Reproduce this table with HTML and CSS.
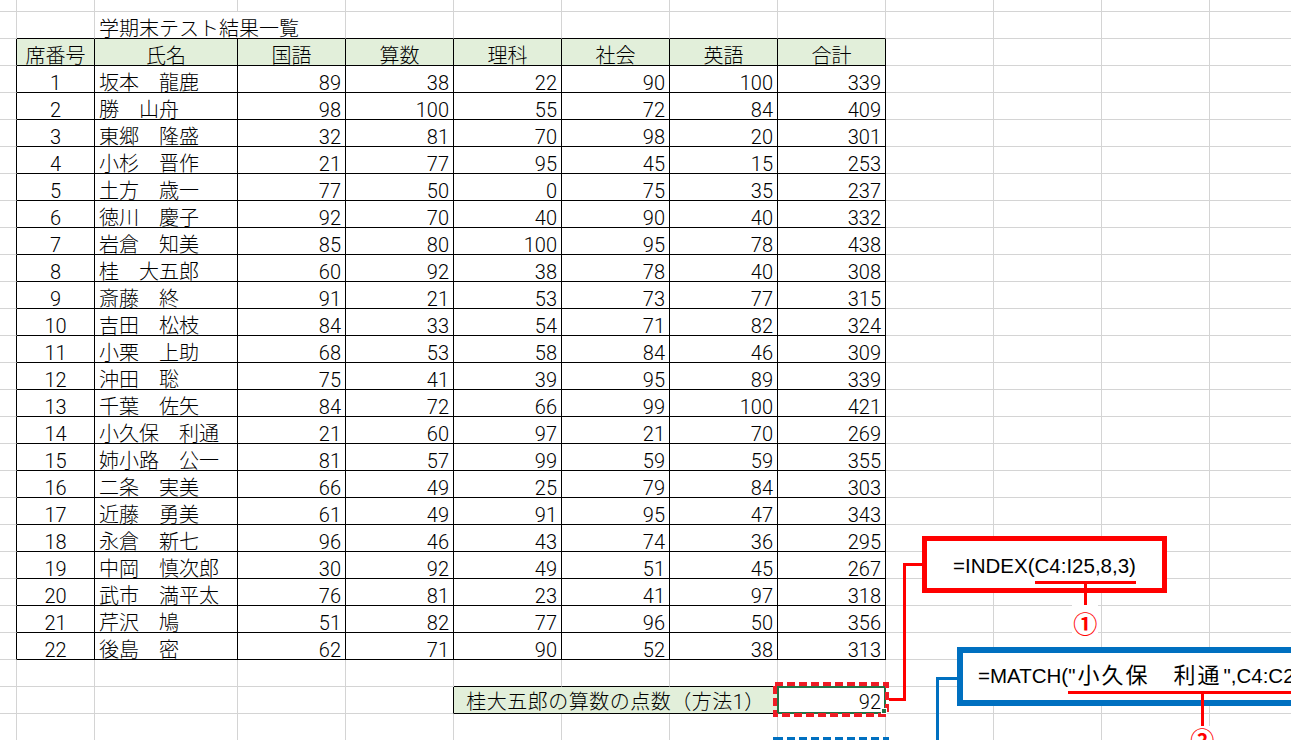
FILE: index.html
```html
<!DOCTYPE html>
<html lang="ja">
<head>
<meta charset="utf-8">
<title>学期末テスト結果一覧</title>
<link rel="stylesheet" href="styles.css">
</head>
<body>
<table class="sheet">
<colgroup>
<col class="ca"><col class="cb"><col class="cc"><col class="cw"><col class="cw"><col class="cw"><col class="cw"><col class="cw"><col class="cw"><col class="cw"><col class="cw"><col class="cw"><col class="cw">
</colgroup>
<tbody>
<tr class="top"><td></td><td></td><td></td><td></td><td></td><td></td><td></td><td></td><td></td><td></td><td></td><td></td><td></td></tr>
<tr><td></td><td class="tb"></td><td class="tb title" colspan="2">学期末テスト結果一覧</td><td class="tb"></td><td class="tb"></td><td class="tb"></td><td class="tb"></td><td class="tb"></td><td></td><td></td><td></td><td></td></tr>
<tr><td class="lb"></td><td class="k h">席番号</td><td class="k h">氏名</td><td class="k h">国語</td><td class="k h">算数</td><td class="k h">理科</td><td class="k h">社会</td><td class="k h">英語</td><td class="k h">合計</td><td></td><td></td><td></td><td></td></tr>
<tr><td class="lb"></td><td class="k c">1</td><td class="k">坂本　龍鹿</td><td class="k n">89</td><td class="k n">38</td><td class="k n">22</td><td class="k n">90</td><td class="k n">100</td><td class="k n">339</td><td></td><td></td><td></td><td></td></tr>
<tr><td class="lb"></td><td class="k c">2</td><td class="k">勝　山舟</td><td class="k n">98</td><td class="k n">100</td><td class="k n">55</td><td class="k n">72</td><td class="k n">84</td><td class="k n">409</td><td></td><td></td><td></td><td></td></tr>
<tr><td class="lb"></td><td class="k c">3</td><td class="k">東郷　隆盛</td><td class="k n">32</td><td class="k n">81</td><td class="k n">70</td><td class="k n">98</td><td class="k n">20</td><td class="k n">301</td><td></td><td></td><td></td><td></td></tr>
<tr><td class="lb"></td><td class="k c">4</td><td class="k">小杉　晋作</td><td class="k n">21</td><td class="k n">77</td><td class="k n">95</td><td class="k n">45</td><td class="k n">15</td><td class="k n">253</td><td></td><td></td><td></td><td></td></tr>
<tr><td class="lb"></td><td class="k c">5</td><td class="k">土方　歳一</td><td class="k n">77</td><td class="k n">50</td><td class="k n">0</td><td class="k n">75</td><td class="k n">35</td><td class="k n">237</td><td></td><td></td><td></td><td></td></tr>
<tr><td class="lb"></td><td class="k c">6</td><td class="k">徳川　慶子</td><td class="k n">92</td><td class="k n">70</td><td class="k n">40</td><td class="k n">90</td><td class="k n">40</td><td class="k n">332</td><td></td><td></td><td></td><td></td></tr>
<tr><td class="lb"></td><td class="k c">7</td><td class="k">岩倉　知美</td><td class="k n">85</td><td class="k n">80</td><td class="k n">100</td><td class="k n">95</td><td class="k n">78</td><td class="k n">438</td><td></td><td></td><td></td><td></td></tr>
<tr><td class="lb"></td><td class="k c">8</td><td class="k">桂　大五郎</td><td class="k n">60</td><td class="k n">92</td><td class="k n">38</td><td class="k n">78</td><td class="k n">40</td><td class="k n">308</td><td></td><td></td><td></td><td></td></tr>
<tr><td class="lb"></td><td class="k c">9</td><td class="k">斎藤　終</td><td class="k n">91</td><td class="k n">21</td><td class="k n">53</td><td class="k n">73</td><td class="k n">77</td><td class="k n">315</td><td></td><td></td><td></td><td></td></tr>
<tr><td class="lb"></td><td class="k c">10</td><td class="k">吉田　松枝</td><td class="k n">84</td><td class="k n">33</td><td class="k n">54</td><td class="k n">71</td><td class="k n">82</td><td class="k n">324</td><td></td><td></td><td></td><td></td></tr>
<tr><td class="lb"></td><td class="k c">11</td><td class="k">小栗　上助</td><td class="k n">68</td><td class="k n">53</td><td class="k n">58</td><td class="k n">84</td><td class="k n">46</td><td class="k n">309</td><td></td><td></td><td></td><td></td></tr>
<tr><td class="lb"></td><td class="k c">12</td><td class="k">沖田　聡</td><td class="k n">75</td><td class="k n">41</td><td class="k n">39</td><td class="k n">95</td><td class="k n">89</td><td class="k n">339</td><td></td><td></td><td></td><td></td></tr>
<tr><td class="lb"></td><td class="k c">13</td><td class="k">千葉　佐矢</td><td class="k n">84</td><td class="k n">72</td><td class="k n">66</td><td class="k n">99</td><td class="k n">100</td><td class="k n">421</td><td></td><td></td><td></td><td></td></tr>
<tr><td class="lb"></td><td class="k c">14</td><td class="k">小久保　利通</td><td class="k n">21</td><td class="k n">60</td><td class="k n">97</td><td class="k n">21</td><td class="k n">70</td><td class="k n">269</td><td></td><td></td><td></td><td></td></tr>
<tr><td class="lb"></td><td class="k c">15</td><td class="k">姉小路　公一</td><td class="k n">81</td><td class="k n">57</td><td class="k n">99</td><td class="k n">59</td><td class="k n">59</td><td class="k n">355</td><td></td><td></td><td></td><td></td></tr>
<tr><td class="lb"></td><td class="k c">16</td><td class="k">二条　実美</td><td class="k n">66</td><td class="k n">49</td><td class="k n">25</td><td class="k n">79</td><td class="k n">84</td><td class="k n">303</td><td></td><td></td><td></td><td></td></tr>
<tr><td class="lb"></td><td class="k c">17</td><td class="k">近藤　勇美</td><td class="k n">61</td><td class="k n">49</td><td class="k n">91</td><td class="k n">95</td><td class="k n">47</td><td class="k n">343</td><td></td><td></td><td></td><td></td></tr>
<tr><td class="lb"></td><td class="k c">18</td><td class="k">永倉　新七</td><td class="k n">96</td><td class="k n">46</td><td class="k n">43</td><td class="k n">74</td><td class="k n">36</td><td class="k n">295</td><td></td><td></td><td></td><td></td></tr>
<tr><td class="lb"></td><td class="k c">19</td><td class="k">中岡　慎次郎</td><td class="k n">30</td><td class="k n">92</td><td class="k n">49</td><td class="k n">51</td><td class="k n">45</td><td class="k n">267</td><td></td><td></td><td></td><td></td></tr>
<tr><td class="lb"></td><td class="k c">20</td><td class="k">武市　満平太</td><td class="k n">76</td><td class="k n">81</td><td class="k n">23</td><td class="k n">41</td><td class="k n">97</td><td class="k n">318</td><td></td><td></td><td></td><td></td></tr>
<tr><td class="lb"></td><td class="k c">21</td><td class="k">芹沢　鳩</td><td class="k n">51</td><td class="k n">82</td><td class="k n">77</td><td class="k n">96</td><td class="k n">50</td><td class="k n">356</td><td></td><td></td><td></td><td></td></tr>
<tr><td class="lb"></td><td class="k c">22</td><td class="k">後島　密</td><td class="k n">62</td><td class="k n">71</td><td class="k n">90</td><td class="k n">52</td><td class="k n">38</td><td class="k n">313</td><td></td><td></td><td></td><td></td></tr>
<tr><td></td><td></td><td></td><td></td><td></td><td class="tb"></td><td class="tb"></td><td class="tb"></td><td></td><td></td><td></td><td></td><td></td></tr>
<tr class="res-row"><td></td><td></td><td></td><td></td><td class="lb"></td><td class="lab" colspan="3">桂大五郎の算数の点数（方法1）</td><td class="n">92</td><td></td><td></td><td></td><td></td></tr>
<tr><td></td><td></td><td></td><td></td><td></td><td></td><td></td><td></td><td></td><td></td><td></td><td></td><td></td></tr>
</tbody>
</table>

<svg class="marks" width="1291" height="740" viewBox="0 0 1291 740" aria-hidden="true">
  <rect x="778" y="687" width="107" height="26" fill="none" stroke="#217346" stroke-width="2"/>
  <rect x="775" y="684" width="112" height="31" fill="none" stroke="#ee1c25" stroke-width="4" stroke-dasharray="8 4"/>
  <rect x="881.5" y="708.5" width="5" height="5" fill="#217346" stroke="#fff" stroke-width="1"/>
  <rect x="775" y="739" width="112" height="60" fill="none" stroke="#0070c0" stroke-width="4" stroke-dasharray="8 4"/>
  <polyline points="922,564.5 904.5,564.5 904.5,699.5 889,699.5" fill="none" stroke="#f00" stroke-width="3"/>
  <polyline points="957,678.5 937.5,678.5 937.5,745" fill="none" stroke="#0070c0" stroke-width="3"/>
</svg>

<div class="callout index">=INDEX(<span class="ul">C4:I25,8,3)<span class="pin p1"><span class="num">①</span></span></span></div>
<div class="callout match">=MATCH(<span class="ul">"<span class="jp">小久保　利通</span>",C4:C25,0)<span class="pin p2"><span class="num">②</span></span></span></div>
</body>
</html>
```
FILE: styles.css
```css
html, body {
  margin: 0;
  padding: 0;
  background: #fff;
  overflow: hidden;
}
body {
  position: relative;
  width: 1291px;
  height: 740px;
}

/* ---------- spreadsheet ---------- */
.sheet {
  border-collapse: separate;
  border-spacing: 0;
  table-layout: fixed;
  width: 1318px;
  font-family: "Roboto", "Noto Sans CJK JP", sans-serif;
  font-size: 20px;
  font-weight: 300;
  color: #000;
}
.sheet .ca { width: 17px; }
.sheet .cb { width: 78px; }
.sheet .cc { width: 143px; }
.sheet .cw { width: 108px; }

.sheet td {
  box-sizing: border-box;
  height: 27px;
  padding: 0 4px;
  border: 0;
  border-right: 1px solid #d4d4d4;
  border-bottom: 1px solid #d4d4d4;
  line-height: 18px;
  vertical-align: bottom;
  white-space: nowrap;
}
.sheet tr.top td { height: 12px; }

.sheet td.lb { border-right-color: #000; }
.sheet td.tb { border-bottom-color: #000; }
.sheet td.k { border-right-color: #000; border-bottom-color: #000; }
.sheet td.h { background: #e2efda; text-align: center; }
.sheet td.c { text-align: center; }
.sheet td.n { text-align: right; }

.sheet tr.res-row td { padding-bottom: 2px; }
.sheet td.lab {
  background: #e2efda;
  text-align: center;
  letter-spacing: 0.5px;
  border-right-color: #000;
  border-bottom-color: #000;
}

/* ---------- annotations ---------- */
.marks {
  position: absolute;
  left: 0;
  top: 0;
  pointer-events: none;
}
.callout {
  position: absolute;
  box-sizing: border-box;
  background: #fff;
  font-family: "Liberation Sans", "Noto Sans CJK JP", sans-serif;
  font-size: 20.5px;
  line-height: 44px;
  white-space: nowrap;
  color: #000;
}
.index {
  left: 922px;
  top: 536px;
  width: 245px;
  height: 57px;
  border: 5px solid #f00;
  padding-top: 3px;
  text-align: center;
}
.match {
  left: 957px;
  top: 647px;
  width: 420px;
  height: 59px;
  border: 6px solid #0070c0;
  padding: 1px 0 0 15px;
}
.match .jp {
  font-size: 22px;
  letter-spacing: 2px;
  margin: 0 2px;
}
.ul {
  position: relative;
  padding-bottom: 4px;
  border-bottom: 3px solid #f00;
}
.pin {
  position: absolute;
  top: 100%;
  left: 50%;
  transform: translateX(-50%);
  display: flex;
  flex-direction: column;
  align-items: center;
  line-height: 1;
}
.pin::before {
  content: "";
  width: 3px;
  height: 24px;
  background: #f00;
}
.pin.p1 .num { padding-top: 5px; }
.pin.p2 { left: 134px; }
.pin.p2::before { height: 35px; }
.num {
  font-family: "Noto Sans CJK JP", sans-serif;
  font-weight: 700;
  font-size: 24px;
  line-height: 26px;
  color: #f00;
  background: #fff;
  padding: 0 1px;
}
```
